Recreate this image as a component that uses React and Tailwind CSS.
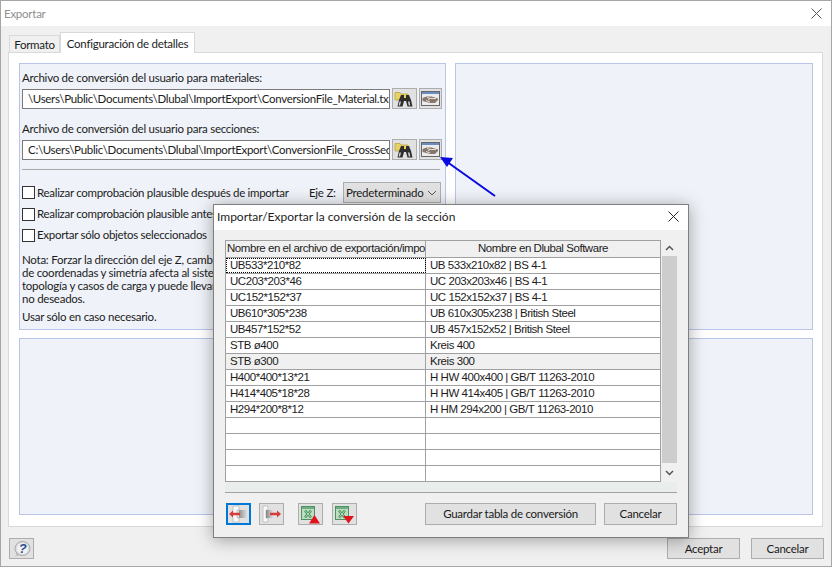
import React from "react";

const ui = { fontFamily: 'Lato, "Noto Sans", sans-serif' };

function Binoculars() {
  return (
    <svg width="21" height="18" viewBox="0 0 21 18">
      <path d="M1 2.500h5l1 1.500h7v6H1z" fill="#e6d260" stroke="#b9a544" strokeWidth="0.8" />
      <path d="M7 5h3v3h2V5h3l2 5 1.500 6.500h-5L12 11h-2l-1.500 5.500h-5L5 10z" fill="#2e2e2e" />
      <path d="M5.500 11.500h1.500l-1 4H4.700zM14 11.500h1.500l.8 4h-1.500z" fill="#d9d9d9" />
    </svg>
  );
}
function HandWin() {
  return (
    <svg width="19" height="15" viewBox="0 0 19 15">
      <rect x="0.500" y="0.500" width="18" height="14" fill="#ececec" stroke="#666" />
      <rect x="1" y="1" width="17" height="2" fill="#6a8cc0" />
      <path d="M1.500 7l4-1.500h5l6.500 2v1.500l-3 3H9L1.500 10z" fill="#85786e" />
      <path d="M6 6.500l4 1h5M5 9.500l4 1.500M9 7.500l-2 1.500" stroke="#f3e9de" strokeWidth="0.9" fill="none" />
    </svg>
  );
}
function TransferIcon({ right }) {
  return right ? (
    <svg width="21" height="18" viewBox="0 0 21 18">
      <defs><linearGradient id="gr" x1="0" x2="1"><stop offset="0" stopColor="#858585" /><stop offset="1" stopColor="#e0e0e0" /></linearGradient></defs>
      <path d="M2 1h5v4H5v8h2v4H2z" fill="#f8f8f8" stroke="#b4b4b4" strokeWidth="0.7" />
      <rect x="5" y="5" width="7" height="8" fill="url(#gr)" />
      <path d="M9 7.700h7V5.500l4 3.500-4 3.500v-2.200H9z" fill="#d63c3c" />
    </svg>
  ) : (
    <svg width="21" height="18" viewBox="0 0 21 18">
      <defs><linearGradient id="gl" x1="0" x2="1"><stop offset="0" stopColor="#8f8f8f" /><stop offset="1" stopColor="#dedede" /></linearGradient></defs>
      <path d="M5 1h6v4H9v8h2v4H5z" fill="#f8f8f8" stroke="#b4b4b4" strokeWidth="0.7" />
      <rect x="11" y="5" width="8" height="8" fill="url(#gl)" />
      <path d="M12 7.700H5V5.500L1 9l4 3.500v-2.200h7z" fill="#d63c3c" />
    </svg>
  );
}
function ExcelIcon({ down }) {
  return (
    <svg width="21" height="19" viewBox="0 0 21 19">
      <rect x="1.500" y="1.500" width="13" height="13" fill="#bfdcc0" stroke="#4c9262" />
      <rect x="2" y="2" width="12" height="2" fill="#6fae83" />
      <path d="M5 5.500l6 7M11 5.500l-6 7" stroke="#2f8a4a" strokeWidth="2.400" />
      <path d="M5 5.500l6 7M11 5.500l-6 7" stroke="#e8f4e8" strokeWidth="0.800" />
      {down ? <path d="M9 11h11l-5.500 7.500z" fill="#e0141c" /> : <path d="M9 18.500l5.500-8.500 5.500 8.500z" fill="#e0141c" />}
    </svg>
  );
}
function HelpIcon() {
  return (
    <svg width="18" height="18" viewBox="0 0 18 18">
      <path d="M2.500 16.500l1-4.500 3.500 3z" fill="#c4c4c4" />
      <ellipse cx="9.500" cy="8.500" rx="7.500" ry="7" fill="#dcdcdc" stroke="#a8a8a8" />
      <ellipse cx="9.500" cy="8.500" rx="5.500" ry="5.500" fill="#f2f2f2" />
      <text x="9.500" y="13" textAnchor="middle" fontSize="13" fontWeight="700" fontStyle="italic" fill="#2a4f92" fontFamily="Liberation Sans, sans-serif">?</text>
    </svg>
  );
}

const btn = "border border-[#adadad] bg-[#e1e1e1] flex items-center justify-center text-[11.5px] text-[#1a1a1a]";

const rows = [
  ["UB533*210*82", "UB 533x210x82 | BS 4-1"],
  ["UC203*203*46", "UC 203x203x46 | BS 4-1"],
  ["UC152*152*37", "UC 152x152x37 | BS 4-1"],
  ["UB610*305*238", "UB 610x305x238 | British Steel"],
  ["UB457*152*52", "UB 457x152x52 | British Steel"],
  ["STB ø400", "Kreis 400"],
  ["STB ø300", "Kreis 300"],
  ["H400*400*13*21", "H HW 400x400 | GB/T 11263-2010"],
  ["H414*405*18*28", "H HW 414x405 | GB/T 11263-2010"],
  ["H294*200*8*12", "H HM 294x200 | GB/T 11263-2010"],
  ["", ""],
  ["", ""],
  ["", ""],
  ["", ""],
];

function PathRow({ label, value, active, className }) {
  return (
    <div className={className}>
      <div className="h-[16px] leading-[18px] text-[11.5px]">{label}</div>
      <div className="flex mt-[3px] items-center">
        <div className="w-[368px] h-[20px] border border-[#7a7a7a] bg-white pl-[5px] text-[11.5px] leading-[18px] tracking-[-0.3px] whitespace-nowrap overflow-hidden">{value}</div>
        <div className={`${btn} w-[25px] h-[21px] ml-[2px]`}><Binoculars /></div>
        <div className={`${btn} w-[23px] h-[21px] ml-[2px] ${active ? "border-[#6f83b8] bg-[#dfe4ee]" : ""}`}><HandWin /></div>
      </div>
    </div>
  );
}

function Check({ children, className }) {
  return (
    <div className={`flex items-center h-[16px] ${className || ""}`}>
      <div className="w-[13px] h-[13px] border border-[#333] bg-white shrink-0" />
      <span className="ml-[2px] text-[11.5px] tracking-[-0.3px] whitespace-nowrap">{children}</span>
    </div>
  );
}

export default function App() {
  return (
    <div style={ui} className="relative w-[832px] h-[567px] overflow-hidden bg-[#f0f0f0] border border-[#a6a6a6] text-[#1c1c1c] tracking-[-0.25px] flex flex-col">
      <div className="h-[25px] shrink-0 bg-white flex items-center justify-between pl-[3px] pr-[9px]">
        <span className="text-[11.5px] text-[#8f8f8f]">Exportar</span>
        <svg width="11" height="11" viewBox="0 0 11 11"><path d="M0.500 0.500l10 10M10.500 0.500l-10 10" stroke="#555" strokeWidth="1" /></svg>
      </div>

      <div className="flex flex-col flex-1 pl-[7px] pr-[7px]">
        <div className="flex items-end h-[26px] pl-[1px] shrink-0 relative z-10">
          <div className="h-[17px] w-[51px] border border-[#d9d9d9] border-b-0 bg-[#f0f0f0] text-[11.5px] flex items-center justify-center pt-[2px] whitespace-nowrap">Formato</div>
          <div className="h-[21px] w-[135px] -mb-px border border-[#d9d9d9] border-b-0 bg-white text-[11.5px] flex items-start pt-[2px] justify-center whitespace-nowrap">Configuración de detalles</div>
        </div>
        <div className="h-[475px] w-[815px] bg-white border border-[#d9d9d9] pt-[10px] pl-[10px] pr-[9px] flex flex-col gap-[8px]">
          <div className="flex gap-[9px] h-[267px] shrink-0">
            <div className="w-[427px] bg-[#eff2f8] border border-[#b8c4ea] pl-[2px] pt-[5px] flex flex-col">
              <PathRow label="Archivo de conversión del usuario para materiales:" value="\Users\Public\Documents\Dlubal\ImportExport\ConversionFile_Material.txt" />
              <PathRow className="mt-[11px]" active label="Archivo de conversión del usuario para secciones:" value="C:\Users\Public\Documents\Dlubal\ImportExport\ConversionFile_CrossSection.txt" />
              <div className="h-px w-[418px] bg-[#a8a8a8] mt-[9px] shrink-0" />
              <div className="flex items-center mt-[12px] h-[21px]">
                <Check className="w-[287px] shrink-0">Realizar comprobación plausible después de importar</Check>
                <span className="w-[34px] shrink-0 text-[11.5px] whitespace-nowrap">Eje Z:</span>
                <div className={`${btn} w-[98px] h-[21px] !justify-between pl-[2px] pr-[3px] shrink-0`}>
                  <span className="whitespace-nowrap">Predeterminado</span>
                  <svg width="10" height="6" viewBox="0 0 10 6"><path d="M1 1l4 4 4-4" fill="none" stroke="#555" /></svg>
                </div>
              </div>
              <Check className="mt-[3px]">Realizar comprobación plausible antes de exportar</Check>
              <Check className="mt-[5px]">Exportar sólo objetos seleccionados</Check>
              <div className="mt-[10px] text-[11.5px] leading-[13px] whitespace-nowrap">
                <div>Nota: Forzar la dirección del eje Z, cambiar el sistema</div>
                <div>de coordenadas y simetría afecta al sistema completo,</div>
                <div>topología y casos de carga y puede llevar a resultados</div>
                <div>no deseados.</div>
                <div className="mt-[5px]">Usar sólo en caso necesario.</div>
              </div>
            </div>
            <div className="flex-1 bg-[#eff2f8] border border-[#b8c4ea]" />
          </div>
          <div className="h-[177px] shrink-0 bg-[#eff2f8] border border-[#b8c4ea]" />
        </div>
        <div className="flex items-start justify-between pl-[1px] shrink-0 pt-[11px]">
          <div className={`${btn} w-[25px] h-[21px]`}><HelpIcon /></div>
          <div className="flex gap-[11px]">
            <div className={`${btn} w-[73px] h-[21px]`}>Aceptar</div>
            <div className={`${btn} w-[73px] h-[21px]`}>Cancelar</div>
          </div>
        </div>
      </div>

      <svg className="absolute left-[434px] top-[148px]" width="66" height="52" viewBox="0 0 66 52">
        <path d="M8 10L60 47" stroke="#0a0ae0" strokeWidth="2" fill="none" />
        <path d="M5 8l13 1-6 9z" fill="#0a0ae0" />
      </svg>

      <div className="absolute left-[212px] top-[203px] w-[476px] h-[334px] bg-[#f0f0f0] border border-[#7f7f7f] shadow-[0_2px_16px_rgba(0,0,0,0.35)] flex flex-col">
        <div className="h-[25px] shrink-0 bg-white flex items-center justify-between pl-[3px] pr-[9px] pb-[2px]">
          <span className="text-[12px] tracking-normal">Importar/Exportar la conversión de la sección</span>
          <svg width="11" height="11" viewBox="0 0 11 11"><path d="M0.500 0.500l10 10M10.500 0.500l-10 10" stroke="#222" strokeWidth="1" /></svg>
        </div>
        <div className="flex pl-[11px] pt-[10px]">
          <div className="w-[436px] h-[242px] border border-b-0 border-[#a0a0a0] bg-white flex flex-col tracking-[-0.45px]" style={{ fontFamily: '"Liberation Sans", Arial, sans-serif' }}>
            <div className="flex h-[17px] shrink-0 bg-[#f0f0f0] border-b border-[#a0a0a0] text-[11.5px] leading-[15px]">
              <div className="w-[200px] shrink-0 border-r border-[#a0a0a0] pl-[1px] overflow-hidden whitespace-nowrap">Nombre en el archivo de exportación/importación</div>
              <div className="flex-1 text-center">Nombre en Dlubal Software</div>
            </div>
            {rows.map((r, i) => (
              <div key={i} className={`flex h-[16px] shrink-0 border-b border-[#a0a0a0] text-[11.5px] leading-[15px] ${r[0] === "STB ø300" ? "bg-[#f0f0f0]" : ""}`}>
                <div className={`w-[200px] shrink-0 border-r border-[#a0a0a0] pl-[4px] ${i === 0 ? "outline-1 outline-dotted outline-black -outline-offset-1" : ""}`}>{r[0]}</div>
                <div className="flex-1 pl-[4px]">{r[1]}</div>
              </div>
            ))}
          </div>
          <div className="w-[15px] ml-[1px] h-[242px] flex flex-col items-center">
            <div className="h-[16px] flex items-center justify-center"><svg width="9" height="6" viewBox="0 0 9 6"><path d="M1 5l3.500-3.500L8 5" fill="none" stroke="#555" strokeWidth="1.500" /></svg></div>
            <div className="w-full h-[207px] bg-[#cdcdcd]" />
            <div className="flex-1 flex items-center justify-center"><svg width="9" height="6" viewBox="0 0 9 6"><path d="M1 1l3.500 3.500L8 1" fill="none" stroke="#555" strokeWidth="1.500" /></svg></div>
          </div>
        </div>
        <div className="ml-[11px] w-[452px] h-[11px] bg-[#e9eeec] border-b border-[#a0a0a0] shrink-0" />
        <div className="flex items-center pl-[12px] mt-[10px] h-[22px]">
          <div className="w-[25px] h-[22px] border-2 border-[#0078d7] bg-[#e1e1e1] flex items-center justify-center"><TransferIcon /></div>
          <div className={`${btn} w-[25px] h-[22px] ml-[8px]`}><TransferIcon right /></div>
          <div className={`${btn} w-[25px] h-[22px] ml-[14px]`}><ExcelIcon /></div>
          <div className={`${btn} w-[25px] h-[22px] ml-[9px]`}><ExcelIcon down /></div>
          <div className={`${btn} w-[171px] h-[22px] ml-[68px]`}>Guardar tabla de conversión</div>
          <div className={`${btn} w-[73px] h-[22px] ml-[8px]`}>Cancelar</div>
        </div>
      </div>
    </div>
  );
}
